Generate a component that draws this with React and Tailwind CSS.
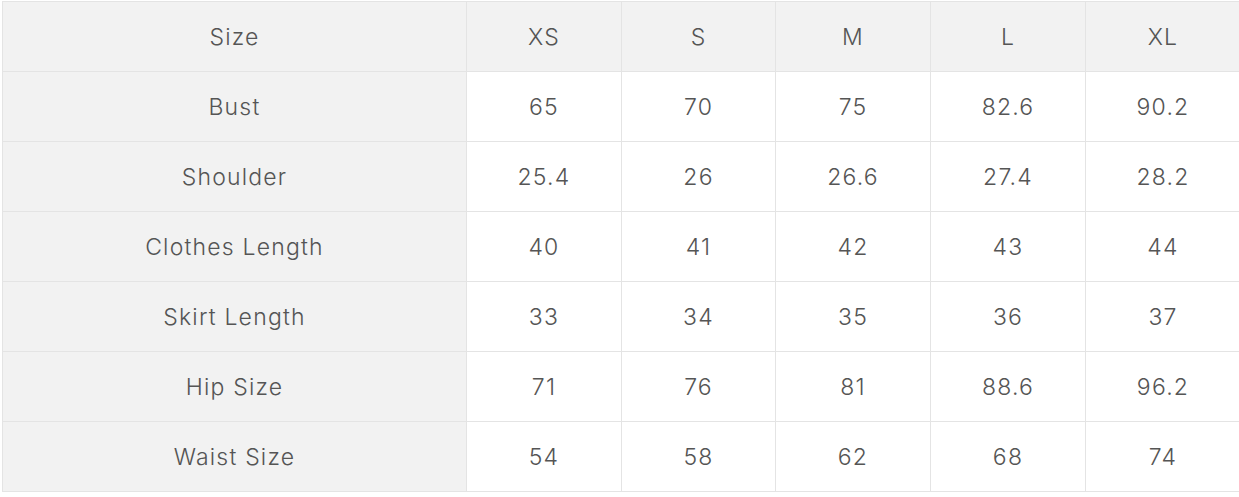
const sizes = ['XS', 'S', 'M', 'L', 'XL']

const rows = [
  { label: 'Bust', values: ['65', '70', '75', '82.6', '90.2'] },
  { label: 'Shoulder', values: ['25.4', '26', '26.6', '27.4', '28.2'] },
  { label: 'Clothes Length', values: ['40', '41', '42', '43', '44'] },
  { label: 'Skirt Length', values: ['33', '34', '35', '36', '37'] },
  { label: 'Hip Size', values: ['71', '76', '81', '88.6', '96.2'] },
  { label: 'Waist Size', values: ['54', '58', '62', '68', '74'] },
]

export default function App() {
  return (
    <div className="w-[1239px] h-[497px] bg-white pl-[2px] pt-[1px] font-['Inter',sans-serif] font-light text-[23px] text-[#555555] tracking-[1.2px]">
      <table className="border-collapse table-fixed w-[1238px]">
        <colgroup>
          <col className="w-[464px]" />
          <col className="w-[155px]" />
          <col className="w-[154px]" />
          <col className="w-[155px]" />
          <col className="w-[155px]" />
          <col className="w-[155px]" />
        </colgroup>
        <thead>
          <tr className="h-[70px] bg-[#f2f2f2]">
            <th className="border border-[#e4e4e4] font-light pt-[2px]">Size</th>
            {sizes.map(s => (
              <th key={s} className="border border-[#e4e4e4] font-light pt-[2px]">{s}</th>
            ))}
          </tr>
        </thead>
        <tbody>
          {rows.map(row => (
            <tr key={row.label} className="h-[70px]">
              <td className="border border-[#e4e4e4] bg-[#f2f2f2] text-center pt-[2px]">{row.label}</td>
              {row.values.map((v, i) => (
                <td key={i} className="border border-[#e4e4e4] text-center pt-[2px]">{v}</td>
              ))}
            </tr>
          ))}
        </tbody>
      </table>
    </div>
  )
}
